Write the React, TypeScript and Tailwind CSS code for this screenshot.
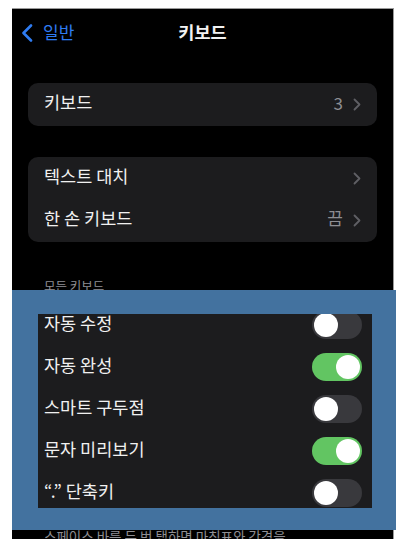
import React from 'react';

const font = { fontFamily: '"Noto Sans CJK KR", "Noto Sans", sans-serif' };

function Chevron({ className = '' }: { className?: string }) {
  return (
    <svg width="8" height="13" viewBox="0 0 8 13" className={className}>
      <path d="M1.5 1.5 L6.5 6.5 L1.5 11.5" fill="none" stroke="#5f5f64" strokeWidth="1.8" strokeLinecap="round" strokeLinejoin="round" />
    </svg>
  );
}

function Toggle({ on }: { on: boolean }) {
  return (
    <div className={`w-[50px] h-[28px] rounded-full p-[2px] flex ${on ? 'bg-[#62c562] justify-end' : 'bg-[#39393d] justify-start'}`}>
      <div className="w-[24px] h-[24px] rounded-full bg-white" />
    </div>
  );
}

function NavRow({ label, value }: { label: string; value?: string }) {
  return (
    <div className="h-[42.5px] flex items-center justify-between pl-4 pr-4">
      <span className="text-[17.5px] leading-[22px] mb-[5px] text-[#f0f0f0]">{label}</span>
      <div className="flex items-center gap-[10px]">
        {value && <span className="text-[17px] leading-[22px] mb-[5px] text-[#8e8e93]">{value}</span>}
        <Chevron />
      </div>
    </div>
  );
}

function ToggleRow({ label, on }: { label: string; on: boolean }) {
  return (
    <div className="h-[42px] flex items-center justify-between pl-4 pr-[15px]">
      <span className="text-[17.5px] leading-[22px] mb-[5px] text-[#f0f0f0]">{label}</span>
      <Toggle on={on} />
    </div>
  );
}

export default function App() {
  const toggles = [
    { label: '자동 수정', on: false },
    { label: '자동 완성', on: true },
    { label: '스마트 구두점', on: false },
    { label: '문자 미리보기', on: true },
    { label: '“.” 단축키', on: false },
  ];

  return (
    <div className="relative w-[404px] h-[547px] bg-white overflow-hidden" style={font}>
      <div className="pt-[8px] pl-[12px]">
        <div className="w-[382px] h-[531px] bg-black overflow-hidden border-t border-r border-[#9a9a9a]">
          {/* nav bar */}
          <div className="h-12 grid grid-cols-3 items-center">
            <div className="flex items-center pl-[9px] gap-[10px]">
              <svg width="12" height="18" viewBox="0 0 12 18">
                <path d="M10 1.5 L2.5 9 L10 16.5" fill="none" stroke="#2f7cf2" strokeWidth="2.6" strokeLinecap="round" strokeLinejoin="round" />
              </svg>
              <span className="text-[17px] leading-[22px] mb-[3px] text-[#2f7cf2]">일반</span>
            </div>
            <div className="text-center text-[17.5px] leading-[22px] mb-[3px] font-semibold text-[#f2f2f2]">키보드</div>
            <div />
          </div>

          <div className="px-4">
            <div className="mt-[26px] rounded-[10px] bg-[#1c1c1e]">
              <div className="h-[43px] flex items-center justify-between px-4">
                <span className="text-[17.5px] leading-[22px] mb-[5px] text-[#f0f0f0]">키보드</span>
                <div className="flex items-center gap-[10px]">
                  <span className="text-[17px] leading-[22px] mb-[4px] text-[#8e8e93]">3</span>
                  <Chevron />
                </div>
              </div>
            </div>

            <div className="mt-[31px] rounded-[10px] bg-[#1c1c1e]">
              <NavRow label="텍스트 대치" />
              <NavRow label="한 손 키보드" value="끔" />
            </div>

            <div className="mt-[36px] pl-4 h-[16px] leading-[16px] text-[12.5px] text-[#8e8e93]">모든 키보드</div>

            <div className="mt-[10px] rounded-[10px] bg-[#1c1c1e]">
              {toggles.map(t => (
                <ToggleRow key={t.label} label={t.label} on={t.on} />
              ))}
            </div>

            <div className="mt-[13px] pl-4 text-[13.5px] leading-[18px] text-[#8e8e93]">
              스페이스 바를 두 번 탭하면 마침표와 간격을
            </div>
          </div>
        </div>
      </div>

      {/* blue highlight frame over the screenshot */}
      <div className="absolute left-[12px] top-[290px] w-[384px] h-[240px] border-[#43729f] border-t-[24px] border-l-[26px] border-r-[24px] border-b-[22px]" />
    </div>
  );
}
